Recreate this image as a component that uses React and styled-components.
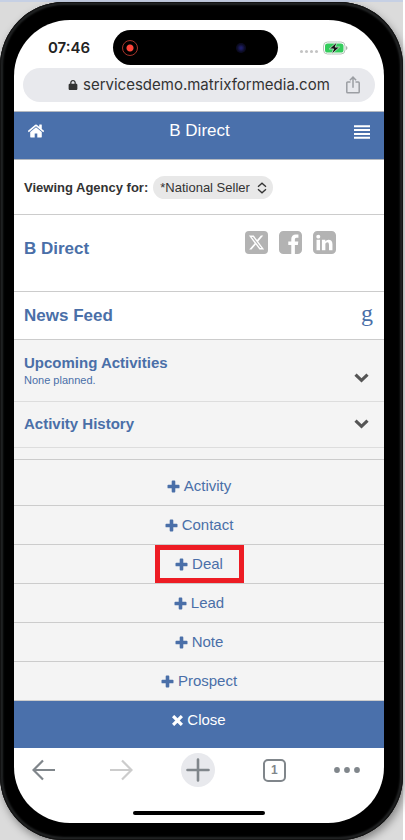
import React from "react";
import styled, { createGlobalStyle } from "styled-components";
//Icons
import { FaLock, FaXTwitter } from "react-icons/fa6";

const newItems = ["Activity", "Contact", "Deal", "Lead", "Note", "Prospect"];

const HomeIcon = () => (
  <svg width="18" height="18" viewBox="0 0 1792 1792" aria-hidden="true">
    <path
      d="M1472 992v480q0 26-19 45t-45 19h-384v-384h-256v384h-384q-26 0-45-19t-19-45v-480q0-1 .5-3t.5-3l575-474 575 474q1 2 1 6zm223-69l-62 74q-8 9-21 11h-3q-13 0-21-7l-692-577-692 577q-12 8-24 7-13-2-21-11l-62-74q-8-10-7-23.500t11-21.500l719-599q32-26 76-26t76 26l244 204v-195q0-14 9-23t23-9h192q14 0 23 9t9 23v408l219 182q10 8 11 21.500t-7 23.500z"
      fill="currentColor"
    />
  </svg>
);

const FacebookIcon = () => (
  <svg width="23" height="23" viewBox="0 128 1536 1536" aria-hidden="true">
    <path
      d="M1248 128q119 0 203.500 84.500t84.500 203.500v960q0 119-84.500 203.500t-203.500 84.500h-188v-595h199l30-232h-229v-148q0-56 23.500-84t91.500-28l122-1v-207q-63-9-178-9-136 0-217.500 80t-81.500 226v171h-200v232h200v595h-532q-119 0-203.500-84.500t-84.500-203.500v-960q0-119 84.500-203.500t203.500-84.500h960z"
      fill="currentColor"
    />
  </svg>
);

const LinkedinIcon = () => (
  <svg width="23" height="23" viewBox="0 128 1536 1536" aria-hidden="true">
    <path
      d="M237 1414h231v-694h-231v694zm246-908q-1-52-36-86t-93-34-94.500 34-36.500 86q0 51 35.500 85.500t92.500 34.500h1q59 0 95-34.500t36-85.500zm585 908h231v-398q0-154-73-233t-193-79q-136 0-209 117h2v-101h-231q3 66 0 694h231v-388q0-38 7-56 15-35 45-59.500t74-24.500q116 0 116 157v371zm468-998v960q0 119-84.500 203.500t-203.500 84.500h-960q-119 0-203.500-84.500t-84.500-203.500v-960q0-119 84.500-203.500t203.500-84.500h960q119 0 203.500 84.500t84.500 203.500z"
      fill="currentColor"
    />
  </svg>
);

const PlusIcon = () => (
  <svg width="13" height="13" viewBox="0 0 13 13" aria-hidden="true">
    <path
      d="M5.6 0.5h1.8q.9 0 .9.9v3.3h3.3q.9 0 .9.9v1.8q0 .9-.9.9H8.3v3.3q0 .9-.9.9H5.6q-.9 0-.9-.9V8.3H1.4q-.9 0-.9-.9V5.6q0-.9.9-.9h3.3V1.4q0-.9.9-.9z"
      fill="currentColor"
    />
  </svg>
);

const CloseIcon = () => (
  <svg width="11" height="11" viewBox="0 0 11 11" aria-hidden="true">
    <path
      d="M2.2 2.2l6.6 6.6M8.8 2.2L2.2 8.8"
      stroke="currentColor"
      strokeWidth="3.2"
      strokeLinecap="square"
    />
  </svg>
);

const ChevronIcon = () => (
  <svg width="15" height="10" viewBox="0 0 15 10" aria-hidden="true">
    <path
      d="M1.5 1.7L7.5 7.3l6-5.6"
      fill="none"
      stroke="currentColor"
      strokeWidth="3.2"
    />
  </svg>
);

const SelectArrows = () => (
  <svg width="10" height="12" viewBox="0 0 10 12" aria-hidden="true">
    <path
      d="M1 4.8L5 1.2l4 3.6M1 7.2l4 3.6 4-3.6"
      fill="none"
      stroke="#333"
      strokeWidth="1.3"
    />
  </svg>
);

const MenuIcon = () => (
  <svg width="16" height="14" viewBox="0 0 16 14" aria-hidden="true">
    <path
      d="M0 1.2h16M0 5.1h16M0 9h16M0 12.8h16"
      stroke="currentColor"
      strokeWidth="2"
    />
  </svg>
);

const ShareIcon = () => (
  <svg width="14" height="18" viewBox="0 0 14 18" aria-hidden="true">
    <path
      d="M4.5 6H1.7q-.9 0-.9.9v9q0 .9.9.9h10.6q.9 0 .9-.9v-9q0-.9-.9-.9H9.5M7 11.8V1.3M3.9 4.2L7 1.1l3.1 3.1"
      fill="none"
      stroke="currentColor"
      strokeWidth="1.5"
    />
  </svg>
);

const BatteryIcon = () => (
  <svg width="25" height="14" viewBox="0 0 25 14" aria-hidden="true">
    <rect x="0.5" y="1" width="21.5" height="12" rx="4" fill="#fff" stroke="#b5c4b9" />
    <rect x="2" y="2.5" width="18.5" height="9" rx="2.6" fill="#34cc5c" />
    <path d="M23 5q1.500.5 1.500 2T23 9z" fill="#a9b3ab" />
    <path
      d="M14.2 .8L6.3 7.9h4.300L8.600 13.200l7.900-7.100h-4.300z"
      fill="#111"
      stroke="#e9fbee"
      strokeWidth="0.7"
    />
  </svg>
);

const ArrowIcon = ({ flip }) => (
  <svg width="24" height="22" viewBox="0 0 24 22" aria-hidden="true">
    <path
      d={flip ? "M1 11h21M13 1.5l9.500 9.500-9.500 9.500" : "M23 11H2M11 1.5L1.500 11l9.500 9.500"}
      fill="none"
      stroke="currentColor"
      strokeWidth="2.2"
    />
  </svg>
);

const App = () => {
  return (
    <>
      <GlobalStyle />
      <Backdrop>
        <Phone>
          <Screen>
            <StatusBar>
              <Time>07:46</Time>
              <Island>
                <RecordDot />
                <Lens />
              </Island>
              <Signals>
                <Dots>
                  <i />
                  <i />
                  <i />
                  <i />
                </Dots>
                <BatteryIcon />
              </Signals>
            </StatusBar>
            <AddressBar>
              <Url>
                <FaLock size={10} />
                <span>servicesdemo.matrixformedia.com</span>
              </Url>
              <ShareButton aria-label="Share">
                <ShareIcon />
              </ShareButton>
            </AddressBar>

            <Header>
              <HeaderLink href="#home" aria-label="Home">
                <HomeIcon />
              </HeaderLink>
              <h1>B Direct</h1>
              <HeaderButton aria-label="Menu">
                <MenuIcon />
              </HeaderButton>
            </Header>

            <AgencyRow>
              <label htmlFor="agency">Viewing Agency for:</label>
              <SelectWrap>
                <select id="agency" defaultValue="national">
                  <option value="national">*National Seller</option>
                </select>
                <SelectArrows />
              </SelectWrap>
            </AgencyRow>
            <NameRow>
              <h2>B Direct</h2>
              <Socials>
                <XLink href="#x" aria-label="X">
                  <FaXTwitter size={17} />
                </XLink>
                <a href="#facebook" aria-label="Facebook">
                  <FacebookIcon />
                </a>
                <a href="#linkedin" aria-label="LinkedIn">
                  <LinkedinIcon />
                </a>
              </Socials>
            </NameRow>
            <NewsRow>
              <h2>News Feed</h2>
              <GoogleLink href="#google">g</GoogleLink>
            </NewsRow>

            <Panel $tall>
              <div>
                <h3>Upcoming Activities</h3>
                <p>None planned.</p>
              </div>
              <Toggle aria-label="Show upcoming activities">
                <ChevronIcon />
              </Toggle>
            </Panel>
            <Panel>
              <h3>Activity History</h3>
              <Toggle aria-label="Show activity history">
                <ChevronIcon />
              </Toggle>
            </Panel>

            <NewMenu>
              {newItems.map((item) => (
                <li key={item}>
                  <MenuButton>
                    <PlusIcon />
                    {item}
                  </MenuButton>
                  {item === "Deal" && <Highlight />}
                </li>
              ))}
            </NewMenu>
            <CloseButton>
              <CloseIcon />
              Close
            </CloseButton>

            <Toolbar>
              <ToolButton aria-label="Back">
                <ArrowIcon />
              </ToolButton>
              <ToolButton $faded aria-label="Forward">
                <ArrowIcon flip />
              </ToolButton>
              <ToolButton $round aria-label="New tab">
                <svg width="24" height="24" viewBox="0 0 24 24" aria-hidden="true">
                  <path
                    d="M12 1.5v21M1.5 12h21"
                    stroke="currentColor"
                    strokeWidth="2.6"
                    strokeLinecap="round"
                  />
                </svg>
              </ToolButton>
              <ToolButton aria-label="Tabs">
                <TabCount>1</TabCount>
              </ToolButton>
              <MoreButton aria-label="More">
                <svg width="26" height="6" viewBox="0 0 26 6" aria-hidden="true">
                  <g fill="currentColor">
                    <circle cx="3" cy="3" r="2.9" />
                    <circle cx="13" cy="3" r="2.9" />
                    <circle cx="23" cy="3" r="2.9" />
                  </g>
                </svg>
              </MoreButton>
            </Toolbar>
            <HomeBar />
          </Screen>
        </Phone>
      </Backdrop>
    </>
  );
};

const GlobalStyle = createGlobalStyle`
  * {
    box-sizing: border-box;
    margin: 0;
    padding: 0;
  }
  body {
    background: #fff;
    font-family: "Liberation Sans", Arial, sans-serif;
    color: #333;
  }
  button {
    background: none;
    border: none;
    font: inherit;
    cursor: pointer;
  }
  a {
    color: inherit;
    text-decoration: none;
  }
  svg {
    display: block;
  }
`;

const Backdrop = styled.div`
  min-height: 100vh;
  margin-right: 2px;
  background: #dbdbdb;
  border-top: 2px solid #c6d0e4;
`;

const Phone = styled.div`
  padding: 18px 19px 17px 14px;
  border-radius: 64px;
  background: #000;
  box-shadow: inset 0 0 1px 1px #111, inset 0 0 2px 3px #242627,
    2px 4px 8px rgba(0, 0, 0, 0.4);
`;

const Screen = styled.div`
  display: flex;
  flex-direction: column;
  overflow: hidden;
  border-radius: 56px;
  background: #fff;
`;

const StatusBar = styled.div`
  display: flex;
  align-items: center;
  justify-content: space-between;
  padding: 10px 36px 3px 34px;
`;

const Time = styled.span`
  font-family: Inter, sans-serif;
  font-size: 15px;
  font-weight: 600;
  line-height: 20px;
  color: #222;
`;

const Island = styled.div`
  display: flex;
  align-items: center;
  justify-content: space-between;
  width: 165px;
  height: 35px;
  padding: 0 32px 0 9px;
  border-radius: 18px;
  background: #000;
`;

const RecordDot = styled.span`
  width: 16px;
  height: 16px;
  border: 1px solid #a3342a;
  border-radius: 50%;
  background: radial-gradient(#ff453a 3px, #000 4px);
`;

const Lens = styled.span`
  width: 10px;
  height: 10px;
  border-radius: 50%;
  background: radial-gradient(#1d1d66 1px, #0b0b22 4px);
`;

const Signals = styled.div`
  display: flex;
  align-items: center;
  gap: 5px;
`;

const Dots = styled.div`
  display: flex;
  gap: 2px;
  padding-top: 7px;
  i {
    width: 3px;
    height: 3px;
    border-radius: 50%;
    background: #c4c4c4;
  }
`;

const AddressBar = styled.div`
  display: flex;
  align-items: center;
  justify-content: space-between;
  margin: 0 9px 9px;
  padding: 0 15px 0 45px;
  border-radius: 17px;
  background: #e8e9ed;
`;

const Url = styled.div`
  display: flex;
  align-items: center;
  gap: 5px;
  font-family: Inter, sans-serif;
  font-size: 15px;
  line-height: 34px;
  color: #333;
`;

const ShareButton = styled.button`
  color: #9b9ea3;
`;

const Header = styled.header`
  display: flex;
  align-items: flex-start;
  justify-content: space-between;
  padding: 8px 14px 15px 13px;
  border-top: 1px solid #b5b9c0;
  border-bottom: 1px solid #b5b9c0;
  background: #4a70ab;
  color: #fff;
  h1 {
    font-size: 17px;
    font-weight: 400;
    line-height: 22px;
  }
`;

const HeaderLink = styled.a`
  padding: 2px 0;
`;

const HeaderButton = styled.button`
  padding: 5px 0;
  color: #fff;
`;

const AgencyRow = styled.div`
  display: flex;
  align-items: center;
  gap: 5px;
  padding: 16px 10px 15px;
  border-bottom: 1px solid #ccc;
  font-size: 13px;
  label {
    font-weight: 700;
  }
`;

const SelectWrap = styled.div`
  display: flex;
  align-items: center;
  padding: 0 6px 0 7px;
  border-radius: 12px;
  background: #e8e8e8;
  select {
    appearance: none;
    height: 23px;
    padding-right: 7px;
    border: none;
    background: none;
    font: inherit;
    color: #333;
  }
`;

const NameRow = styled.section`
  display: flex;
  align-items: flex-start;
  justify-content: space-between;
  padding: 16px 48px 31px 10px;
  border-bottom: 1px solid #ccc;
  color: #4a6fa8;
  h2 {
    padding-top: 7px;
    font-size: 17px;
    line-height: 22px;
  }
`;

const Socials = styled.div`
  display: flex;
  gap: 11px;
  color: #b3b3b3;
`;

const XLink = styled.a`
  display: flex;
  align-items: center;
  justify-content: center;
  width: 23px;
  height: 23px;
  border-radius: 4px;
  background: #b3b3b3;
  color: #fff;
`;

const NewsRow = styled.section`
  display: flex;
  align-items: flex-start;
  justify-content: space-between;
  padding: 0 11px 0 10px;
  border-bottom: 1px solid #ccc;
  color: #4a6fa8;
  h2 {
    font-size: 17px;
    line-height: 47px;
  }
`;

const GoogleLink = styled.a`
  font-family: "Liberation Serif", serif;
  font-size: 24px;
  line-height: 42px;
`;

const Panel = styled.section`
  display: flex;
  align-items: ${(props) => (props.$tall ? "flex-end" : "center")};
  justify-content: space-between;
  padding: ${(props) => (props.$tall ? "13px 15px 13px 10px" : "12px 15px 13px 10px")};
  border-bottom: 1px solid #ddd;
  background: #f4f4f4;
  color: #4a6fa8;
  h3 {
    font-size: 15px;
    line-height: 20px;
  }
  p {
    font-size: 11px;
    line-height: 15px;
  }
`;

const Toggle = styled.button`
  padding: 5px 0;
  color: #555;
`;

const NewMenu = styled.ul`
  margin-top: 11px;
  padding-top: 7px;
  border-top: 1px solid #ccc;
  background: #f4f4f4;
  box-shadow: 0 -11px #f4f4f4;
  list-style: none;
  li {
    position: relative;
    border-bottom: 1px solid #ccc;
  }
`;

const MenuButton = styled.button`
  display: flex;
  align-items: center;
  justify-content: center;
  gap: 4px;
  width: 100%;
  font-size: 15px;
  line-height: 38px;
  color: #4a6fa8;
`;

const Highlight = styled.span`
  position: absolute;
  inset: 0;
  width: 89px;
  margin: 0 auto;
  border: 5px solid #ed1c24;
  pointer-events: none;
`;

const CloseButton = styled(MenuButton)`
  padding-bottom: 9px;
  background: #4a70ab;
  color: #fff;
`;

const Toolbar = styled.nav`
  display: flex;
  align-items: center;
  justify-content: space-between;
  padding: 5px 12px 0 13px;
`;

const ToolButton = styled.button`
  display: flex;
  align-items: center;
  justify-content: center;
  min-width: 34px;
  height: 34px;
  border-radius: 50%;
  background: ${(props) => (props.$round ? "#e8e9ed" : "none")};
  color: ${(props) => (props.$faded ? "#ccc" : "#80868b")};
`;

const MoreButton = styled(ToolButton)`
  padding-right: 12px;
  border-radius: 0;
`;

const TabCount = styled.span`
  width: 23px;
  border: 2px solid #80868b;
  border-radius: 5px;
  font-size: 12px;
  font-weight: 700;
  line-height: 19px;
`;

const HomeBar = styled.div`
  width: 132px;
  height: 4px;
  margin: 24px auto 8px;
  border-radius: 2px;
  background: #000;
`;

export default App;
